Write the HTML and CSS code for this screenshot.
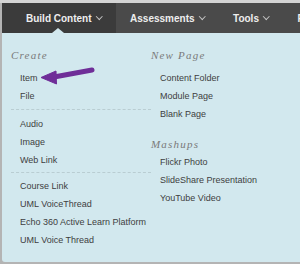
FILE: index.html
```html
<!DOCTYPE html>
<html lang="en">
  <head>
    <meta charset="UTF-8" />
    <title>Build Content</title>
    <link rel="stylesheet" href="styles.css">
  </head>
  <body>
    <div class="frame">
      <!-- Course menu bar -->
      <div class="nav">
        <div class="tab active">Build Content <span class="chev"></span></div>
        <div class="tab">Assessments <span class="chev"></span></div>
        <div class="tab">Tools <span class="chev"></span></div>
        <div class="tab">F</div>
      </div>

      <!-- Drop-down panel -->
      <div class="panel">
        <div class="col">
          <div class="heading">Create</div>
          <ul class="group">
            <li>Item</li>
            <li>File</li>
          </ul>
          <ul class="group">
            <li>Audio</li>
            <li>Image</li>
            <li>Web Link</li>
          </ul>
          <ul class="group tight">
            <li>Course Link</li>
            <li>UML VoiceThread</li>
            <li>Echo 360 Active Learn Platform</li>
            <li>UML Voice Thread</li>
          </ul>
        </div>
        <div class="col">
          <div class="heading">New Page</div>
          <ul class="group">
            <li>Content Folder</li>
            <li>Module Page</li>
            <li>Blank Page</li>
          </ul>
          <div class="heading second">Mashups</div>
          <ul class="group">
            <li>Flickr Photo</li>
            <li>SlideShare Presentation</li>
            <li>YouTube Video</li>
          </ul>
        </div>

        <svg class="arrow" width="60" height="22" viewBox="0 0 60 22">
          <path d="M13 11 L51 4" stroke="#6f2e98" stroke-width="5" stroke-linecap="round" fill="none"/>
          <path d="M0 11.5 L15 5 L15.5 18 Z" fill="#6f2e98" stroke="#6f2e98" stroke-width="1" stroke-linejoin="round"/>
        </svg>
      </div>
    </div>
  </body>
</html>
```

FILE: styles.css
```css
body {
  margin: 0;
  background-color: #b4b4b4;
  font-family: "Liberation Sans", Arial, sans-serif;
}
.frame {
  padding: 3px 0 2px 2px;
  background: linear-gradient(#d4d4d4 3px, #b4b4b4 3px);
}
.nav {
  display: flex;
  height: 30px;
  overflow: hidden;
  background-color: #4a4a4a;
  color: #eeeeee;
  font-size: 10px;
  font-weight: bold;
}
.tab {
  display: flex;
  align-items: center;
  padding: 0 14px;
  white-space: nowrap;
}
.tab.active {
  position: relative;
  padding: 0 14px 0 24px;
  background-color: #3b3b3b;
}
.tab.active::after {
  content: "";
  position: absolute;
  left: 50px;
  bottom: 0;
  border-left: 6px solid transparent;
  border-right: 6px solid transparent;
  border-bottom: 5px solid #d2e8ee;
}
.chev {
  display: inline-block;
  width: 3.5px;
  height: 3.5px;
  margin: 0 1px 3px 5px;
  border-right: 1.5px solid #c4c4c4;
  border-bottom: 1.5px solid #c4c4c4;
  transform: rotate(45deg);
}
.panel {
  position: relative;
  display: flex;
  height: 229px;
  padding: 13px 0 0 9px;
  box-sizing: border-box;
  background-color: #d2e8ee;
  border-bottom-left-radius: 3px;
}
.col {
  width: 140px;
}
.heading {
  height: 18px;
  line-height: 18px;
  margin-bottom: 5px;
  font-family: "Liberation Serif", "Times New Roman", serif;
  font-style: italic;
  font-size: 11px;
  letter-spacing: 1.2px;
  color: #7a7a7a;
}
.heading.second {
  margin-top: 12px;
  margin-bottom: 0;
}
.group {
  list-style: none;
  margin: 0;
  padding: 0 0 0 9px;
}
.group + .group {
  margin-top: 4px;
  padding-top: 5px;
  border-top: 1px dashed #b9cdd2;
}
.group.tight {
  margin-top: 3px;
  padding-top: 4px;
}
.group li {
  height: 18px;
  line-height: 18px;
  font-size: 9px;
  color: #3e3e3e;
  white-space: nowrap;
}
.arrow {
  position: absolute;
  left: 39px;
  top: 33px;
}
```
